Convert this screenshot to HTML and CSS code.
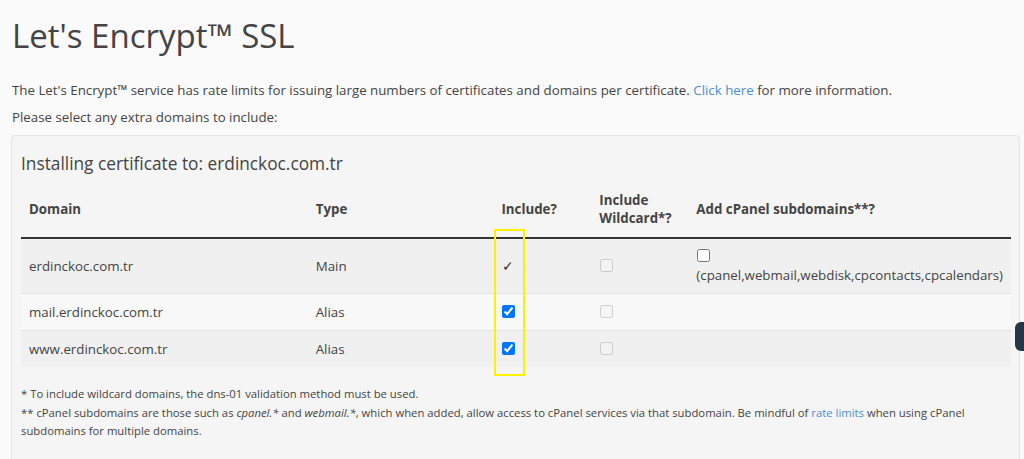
FILE: index.html
```html
<!DOCTYPE html>
<html lang="en">
<head>
<meta charset="utf-8">
<title>Let's Encrypt SSL</title>
<link rel="stylesheet" href="styles.css">
</head>
<body>
<div class="page">
  <h1 class="title">Let's Encrypt™ SSL</h1>
  <p class="intro">The Let's Encrypt™ service has rate limits for issuing large numbers of certificates and domains per certificate. <a href="#" class="link">Click here</a> for more information.</p>
  <p class="intro">Please select any extra domains to include:</p>
  <div class="well">
    <h3 class="well-title">Installing certificate to: erdinckoc.com.tr</h3>
    <table class="domains">
      <thead>
        <tr>
          <th class="c-domain">Domain</th>
          <th class="c-type">Type</th>
          <th class="c-inc">Include?</th>
          <th class="c-wild">Include<br>Wildcard*?</th>
          <th class="c-sub">Add cPanel subdomains**?</th>
        </tr>
      </thead>
      <tbody>
        <tr class="odd">
          <td>erdinckoc.com.tr</td>
          <td>Main</td>
          <td><span class="tick">✓</span></td>
          <td><input type="checkbox" disabled></td>
          <td class="sub-cell"><input type="checkbox"><br><span>(cpanel,webmail,webdisk,cpcontacts,cpcalendars)</span></td>
        </tr>
        <tr class="even">
          <td>mail.erdinckoc.com.tr</td>
          <td>Alias</td>
          <td><input type="checkbox" checked></td>
          <td><input type="checkbox" disabled></td>
          <td></td>
        </tr>
        <tr class="odd">
          <td>www.erdinckoc.com.tr</td>
          <td>Alias</td>
          <td><input type="checkbox" checked></td>
          <td><input type="checkbox" disabled></td>
          <td></td>
        </tr>
      </tbody>
    </table>
    <div class="notes">
      <p class="note">* To include wildcard domains, the dns-01 validation method must be used.</p>
      <p class="note">** cPanel subdomains are those such as <em>cpanel.*</em> and <em>webmail.*</em>, which when added, allow access to cPanel services via that subdomain. Be mindful of <a href="#" class="link">rate limits</a> when using cPanel subdomains for multiple domains.</p>
    </div>
  </div>
</div>
<div class="highlight"></div>
<div class="side-tab"></div>
</body>
</html>
```
FILE: styles.css
```css
html, body {
  margin: 0;
  padding: 0;
  background: #fafafa;
  font-family: "Open Sans", "Liberation Sans", sans-serif;
  color: #444;
  font-size: 13.3px;
  overflow: hidden;
}
.page {
  padding: 0 4px 0 11px;
}
.title {
  margin: 0;
  padding-top: 14px;
  font-size: 33px;
  font-weight: 400;
  line-height: 44px;
  color: #444;
  padding-left: 1px;
}
.intro {
  margin: 0;
  padding-left: 1px;
  line-height: 27px;
}
.intro:first-of-type {
  margin-top: 19px;
}
.link {
  color: #4a8fd4;
  text-decoration: none;
}
.well {
  margin-top: 4px;
  background: #f5f5f5;
  border: 1px solid #e3e3e3;
  border-radius: 4px;
  padding: 10px 8px 22px 9px;
  min-height: 300px;
}
.well-title {
  margin: 6px 0 0 0;
  font-size: 17.3px;
  font-weight: 400;
  line-height: 24px;
  color: #444;
}
.domains {
  width: 100%;
  border-collapse: collapse;
  margin-top: 7px;
}
.domains th {
  text-align: left;
  font-weight: 700;
  padding: 8px 8px 10px;
  line-height: 18px;
  vertical-align: middle;
  border-bottom: 2px solid #333;
  color: #444;
}
.domains td {
  padding: 8px 8px;
  line-height: 20px;
  vertical-align: middle;
  border-top: 1px solid #e2e2e2;
}
.c-domain { width: 271px; }
.c-type { width: 170px; }
.c-inc { width: 82px; }
.c-wild { width: 81px; }
.odd { background: #f0f0f0; }
.even { background: #f8f8f8; }
.domains input {
  margin: 0 0 0 1px;
  vertical-align: -1px;
}
.sub-cell {
  line-height: 19px !important;
}
.tick {
  font-size: 14px;
  color: #333;
  padding-left: 1px;
}
.notes {
  margin-top: 18px;
  font-size: 11.3px;
  line-height: 18.5px;
  color: #444;
}
.note {
  margin: 0;
}
.highlight {
  position: absolute;
  left: 494px;
  top: 229px;
  width: 27px;
  height: 143px;
  border: 2px solid #fff200;
}
.side-tab {
  position: absolute;
  right: 0;
  top: 322px;
  width: 9px;
  height: 29px;
  background: #243746;
  border-radius: 6px 0 0 6px;
}
```
